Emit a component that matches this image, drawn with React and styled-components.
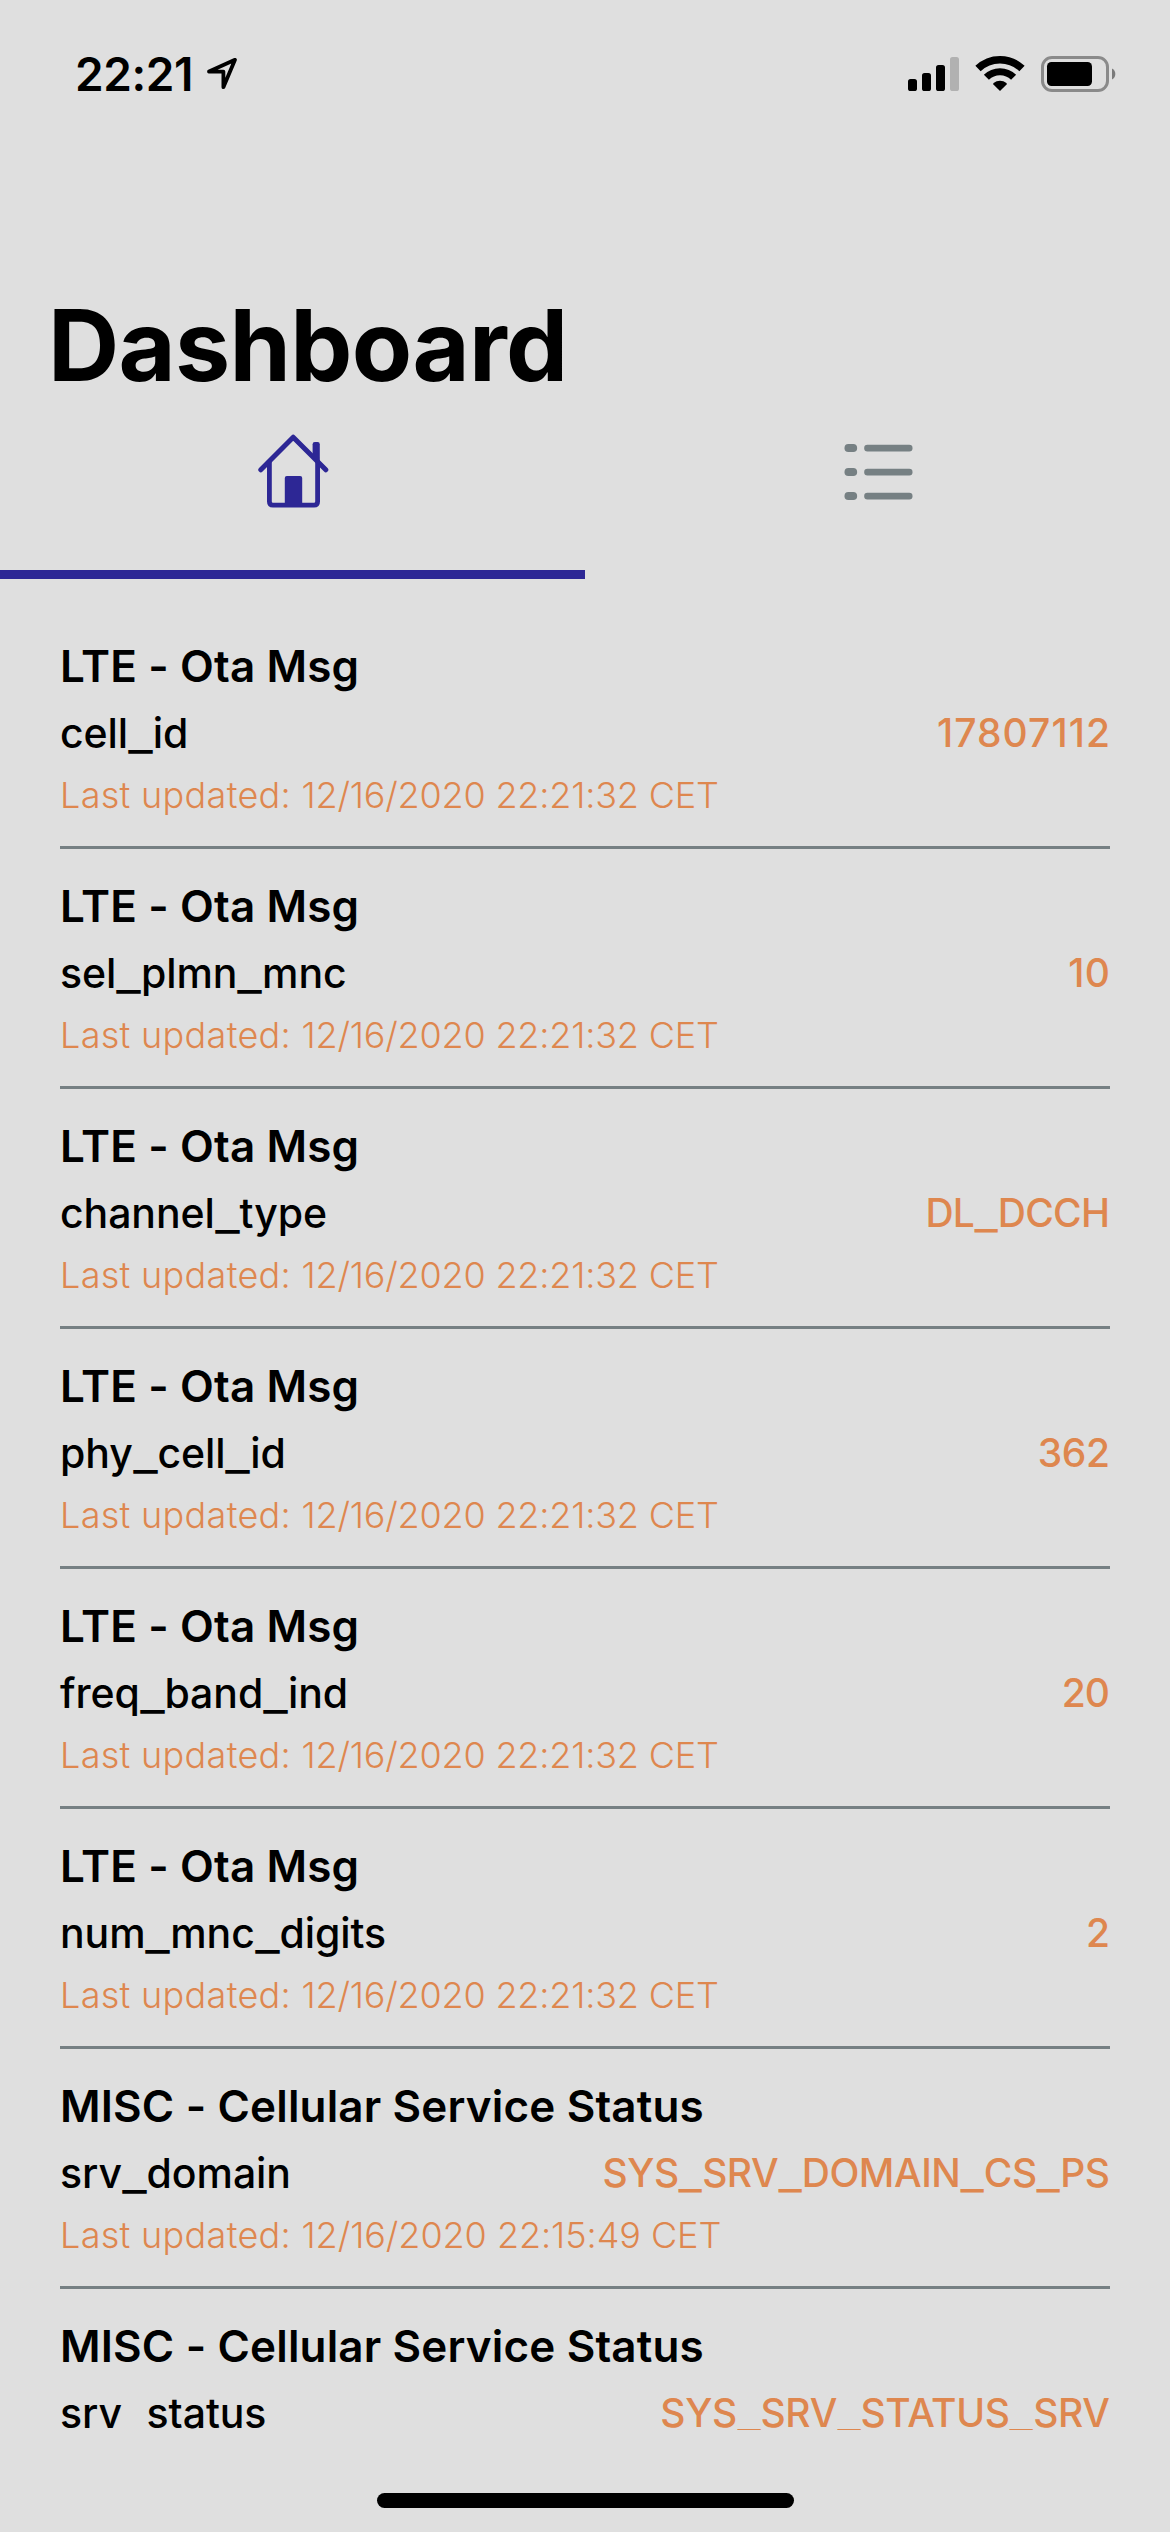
import React, { Fragment } from "react";
import styled, { createGlobalStyle } from "styled-components";

const color = {
  background: "#dfdfdf",
  text: "#000000",
  primary: "#2d2795",
  muted: "#768083",
  accent: "#de874f",
};

const GlobalStyle = createGlobalStyle`
  * { box-sizing: border-box; }
  body {
    margin: 0;
    background: ${color.background};
    font-family: Inter, "Liberation Sans", sans-serif;
  }
`;

const Screen = styled.div`
  display: flex;
  flex-direction: column;
  width: 1170px;
  height: 2532px;
  overflow: hidden;
  background: ${color.background};
  color: ${color.text};
`;

const StatusBar = styled.header`
  display: flex;
  justify-content: space-between;
  height: 132px;
  padding: 46px 53px 0 75px;
`;

const StatusGroup = styled.div`
  display: flex;
  align-items: flex-start;
`;

const Clock = styled.span`
  width: 129px;
  font-size: 46px;
  font-weight: 600;
  line-height: 56px;
  letter-spacing: -0.4px;
`;

const StatusIcon = styled.svg`
  display: block;
  flex: none;
  margin-top: 8px;
  margin-left: ${(p) => p.$gap || 0}px;
`;

const Title = styled.h1`
  margin: 0;
  padding: 153px 48px 0;
  font-size: 98.6px;
  font-weight: 700;
  line-height: 120px;
  letter-spacing: -0.7px;
`;

const Tabs = styled.nav`
  display: flex;
  flex: none;
  height: 174px;
`;

const Tab = styled.div`
  display: flex;
  flex: 1;
  justify-content: center;
  align-items: flex-start;
  padding-top: 29px;
  border-bottom: 9px solid ${(p) => (p.$active ? color.primary : "transparent")};
  color: ${(p) => (p.$active ? color.primary : color.muted)};
`;

const List = styled.main`
  flex: none;
  height: 1851px;
  padding: 30px 60px 0;
  overflow: hidden;
`;

const Row = styled.section`
  height: 240px;
  padding-top: 29px;
  border-bottom: 3px solid ${color.muted};
`;

const Source = styled.h2`
  margin: 0;
  font-size: 44px;
  font-weight: 600;
  line-height: 56px;
  letter-spacing: 0.15px;
`;

const Field = styled.div`
  display: flex;
  justify-content: space-between;
  margin-top: 12px;
  line-height: 54px;
  white-space: nowrap;
`;

const Name = styled.span`
  font-size: 41px;
  font-weight: 500;
  letter-spacing: -0.08px;
`;

const Value = styled.span`
  margin-right: ${(p) => -p.$track}px;
  color: ${color.accent};
  font-size: 39px;
  font-weight: 500;
  letter-spacing: ${(p) => p.$track}px;
`;

const Underscore = styled.span`
  display: inline-block;
  margin: 0 0.07em;
  letter-spacing: 0;
  transform: translateY(2px) scaleX(1.29);
`;

const Updated = styled.p`
  margin: 11px 0 0;
  color: ${color.accent};
  font-size: 36px;
  font-weight: 300;
  line-height: 48px;
  letter-spacing: 0.31px;
`;

const Stamp = styled.span`
  letter-spacing: ${(p) => p.$track}px;
`;

const HomeArea = styled.footer`
  display: flex;
  justify-content: center;
  padding-top: 63px;
`;

const HomeIndicator = styled.div`
  width: 417px;
  height: 15px;
  border-radius: 8px;
  background: #000;
`;

const LocationIcon = () => (
  <StatusIcon width="36" height="40" viewBox="0 0 36 40">
    <path
      d="M31 5.8 5 17.6H19.4V33.2Z"
      fill="none"
      stroke="#000"
      strokeWidth="3.8"
      strokeLinejoin="round"
    />
  </StatusIcon>
);

const SignalIcon = () => (
  <StatusIcon width="51" height="40" viewBox="0 0 51 40">
    <rect x="0" y="25" width="9" height="12" rx="2.6" />
    <rect x="14" y="19" width="9" height="18" rx="2.6" />
    <rect x="28" y="11" width="9" height="26" rx="2.6" />
    <rect x="42" y="3" width="9" height="34" rx="2.6" fill="#b1b1b1" />
  </StatusIcon>
);

const WifiIcon = () => (
  <StatusIcon $gap={16} width="50" height="40" viewBox="0 0 50 40">
    <g fill="none" stroke="#000" strokeLinejoin="round">
      <path d="M3 14.6A31.8 31.8 0 0 1 47 14.6" strokeWidth="7.6" />
      <path d="M11.4 23.3A19.4 19.4 0 0 1 38.6 23.3" strokeWidth="7.2" />
    </g>
    <path d="M25 37 18.4 30.4Q17.8 29.6 18.6 28.9A10.6 10.6 0 0 1 31.4 28.9Q32.2 29.6 31.6 30.4Z" />
  </StatusIcon>
);

const BatteryIcon = () => (
  <StatusIcon $gap={16} width="76" height="40" viewBox="0 0 76 40">
    <rect x="1.5" y="3.5" width="65" height="33" rx="9.5" fill="none" stroke="#8a8a8a" strokeWidth="3" />
    <rect x="6" y="8" width="45" height="24" rx="4.5" />
    <path d="M71 14.4A6.4 6.4 0 0 1 71 25.6Z" fill="#7a7a7a" />
  </StatusIcon>
);

const HomeIcon = () => (
  <svg width="72" height="76" viewBox="0 0 72 76">
    <g fill="none" stroke="currentColor" strokeLinecap="round" strokeLinejoin="round">
      <path d="M3.8 35.8 36.2 3.2 68.8 35.8" strokeWidth="5" />
      <path d="M12.4 28V67.5Q12.4 71.2 16 71.2H57Q60.6 71.2 60.6 67.5V28" strokeWidth="4.8" />
    </g>
    <g fill="currentColor">
      <path d="M55.6 23V10.2Q55.6 8 57.8 8H60.6Q62.8 8 62.8 10.2V31Z" />
      <path d="M27.8 72V44Q27.8 42 29.8 42H43.2Q45.2 42 45.2 44V72Z" />
    </g>
  </svg>
);

const ListIcon = () => (
  <svg width="72" height="76" viewBox="0 0 72 76" fill="currentColor">
    {[10, 34, 58].map((y) => (
      <g key={y}>
        <rect x="2.5" y={y} width="12.6" height="8" rx="3.8" />
        <rect x="22.2" y={y + 0.7} width="48.3" height="6.8" rx="3.2" />
      </g>
    ))}
  </svg>
);

const Identifier = ({ text }) =>
  text.split("_").map((part, i) => (
    <Fragment key={i}>
      {i > 0 && <Underscore>_</Underscore>}
      {part}
    </Fragment>
  ));

const LTE = "LTE - Ota Msg";
const MISC = "MISC - Cellular Service Status";

const rows = [
  { source: LTE, name: "cell_id", value: "17807112", track: 1.07, time: "22:21:32" },
  { source: LTE, name: "sel_plmn_mnc", value: "10", track: 0.3, time: "22:21:32" },
  { source: LTE, name: "channel_type", value: "DL_DCCH", track: -0.7, time: "22:21:32" },
  { source: LTE, name: "phy_cell_id", value: "362", track: -0.4, time: "22:21:32" },
  { source: LTE, name: "freq_band_ind", value: "20", track: -1, time: "22:21:32" },
  { source: LTE, name: "num_mnc_digits", value: "2", track: 0, time: "22:21:32" },
  { source: MISC, name: "srv_domain", value: "SYS_SRV_DOMAIN_CS_PS", track: -0.46, time: "22:15:49" },
  { source: MISC, name: "srv_status", value: "SYS_SRV_STATUS_SRV", track: -0.31, time: "22:15:49" },
];

export default function App() {
  return (
    <>
      <GlobalStyle />
      <Screen>
        <StatusBar>
          <StatusGroup>
            <Clock>22:21</Clock>
            <LocationIcon />
          </StatusGroup>
          <StatusGroup>
            <SignalIcon />
            <WifiIcon />
            <BatteryIcon />
          </StatusGroup>
        </StatusBar>
        <Title>Dashboard</Title>
        <Tabs>
          <Tab $active>
            <HomeIcon />
          </Tab>
          <Tab>
            <ListIcon />
          </Tab>
        </Tabs>
        <List>
          {rows.map((row, i) => (
            <Row key={row.name}>
              <Source>{row.source}</Source>
              <Field>
                <Name>
                  <Identifier text={row.name} />
                </Name>
                <Value $track={row.track}>
                  <Identifier text={row.value} />
                </Value>
              </Field>
              {i < rows.length - 1 && (
                <Updated>
                  Last updated: <Stamp $track={row.source === LTE ? -0.18 : -0.05}>12/16/2020 {row.time} CET</Stamp>
                </Updated>
              )}
            </Row>
          ))}
        </List>
        <HomeArea>
          <HomeIndicator />
        </HomeArea>
      </Screen>
    </>
  );
}
